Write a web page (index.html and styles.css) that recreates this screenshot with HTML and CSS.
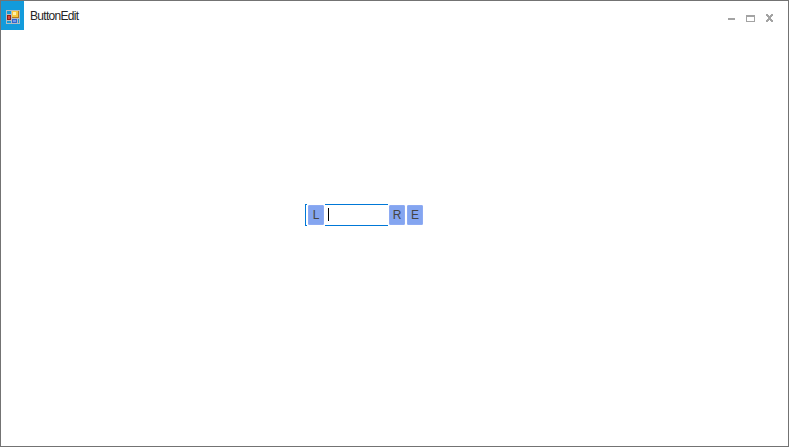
FILE: index.html
```html
<!DOCTYPE html>
<html lang="en">
<head>
<meta charset="utf-8">
<title>ButtonEdit</title>
<link rel="stylesheet" href="styles.css">
</head>
<body>
<div class="window">
  <header class="titlebar">
    <div class="app-icon">
      <svg width="14" height="14" viewBox="0 0 14 14" shape-rendering="crispEdges">
        <path d="M0 0h14v14H0z" fill="#b4bcc2"/>
        <path d="M1 1h4v3H1zM1 11h4v2H1zM12 9h1v4h-1z" fill="#139bdb"/>
        <path d="M6 1h7v7H6z" fill="#b57a20"/>
        <path d="M6 1h6v6H6z" fill="#f8c83c"/>
        <path d="M7 2h3v3H7z" fill="#fff0a8"/>
        <path d="M1 5h4v5H1z" fill="#8e2018"/>
        <path d="M2 6h2v3H2z" fill="#d8463c"/>
        <path d="M6 9h5v4H6z" fill="#3764cc"/>
        <path d="M7 10h3v2H7z" fill="#6f9cf0"/>
      </svg>
    </div>
    <h1 class="title">ButtonEdit</h1>
    <div class="controls">
      <svg width="45" height="8" viewBox="0 0 45 8" shape-rendering="crispEdges" fill="#a3a3a3">
        <path d="M0 4h7v2H0z"/>
        <path fill-rule="evenodd" d="M18 1h9v7h-9zM19 3v4h7V3z"/>
        <path d="M38 0h2v1h1v1h1V1h1V0h2v2h-1v1h-1v2h1v1h1v2h-2V7h-1V6h-1v1h-1v1h-2V6h1V5h1V3h-1V2h-1z"/>
      </svg>
    </div>
  </header>
  <main class="content">
    <div class="button-edit">
      <span class="edge"></span>
      <button class="btn">L</button>
      <div class="field"><span class="caret"></span></div>
      <button class="btn">R</button>
      <button class="btn">E</button>
    </div>
  </main>
</div>
</body>
</html>
```
FILE: styles.css
```css
* { box-sizing: border-box; }
body { margin: 0; font-family: "Liberation Sans", sans-serif; }
.window { width: 789px; height: 447px; border: 1px solid #737373; background: #fff; display: flex; flex-direction: column; }
.titlebar { display: flex; height: 29px; }
.app-icon { width: 23px; height: 29px; background: #139bdb; padding: 9px 4px 0 5px; }
.app-icon svg, .controls svg { display: block; }
.title { margin: 0 0 0 6px; font-size: 12px; font-weight: 400; line-height: 30px; letter-spacing: -0.7px; color: #262626; flex: 1; }
.controls { padding: 13px 15px 0 0; }
.content { flex: 1; padding: 174px 0 0 304px; }
.button-edit { display: flex; height: 22px; align-items: center; }
.edge { width: 2px; height: 22px; border: 1px solid #0078d7; border-right: 0; margin-right: 1px; }
.btn { width: 16px; height: 20px; padding: 0; border: 1px solid #8eabf3; border-radius: 1px; background: #84a5f0; color: #444; font: 12px "Liberation Sans", sans-serif; }
.btn + .btn { margin-left: 2px; }
.field { width: 63px; height: 22px; border: solid #0078d7; border-width: 1px 0; margin: 0 1px; padding: 3px; }
.caret { display: block; width: 1px; height: 13px; background: #000; }
```
